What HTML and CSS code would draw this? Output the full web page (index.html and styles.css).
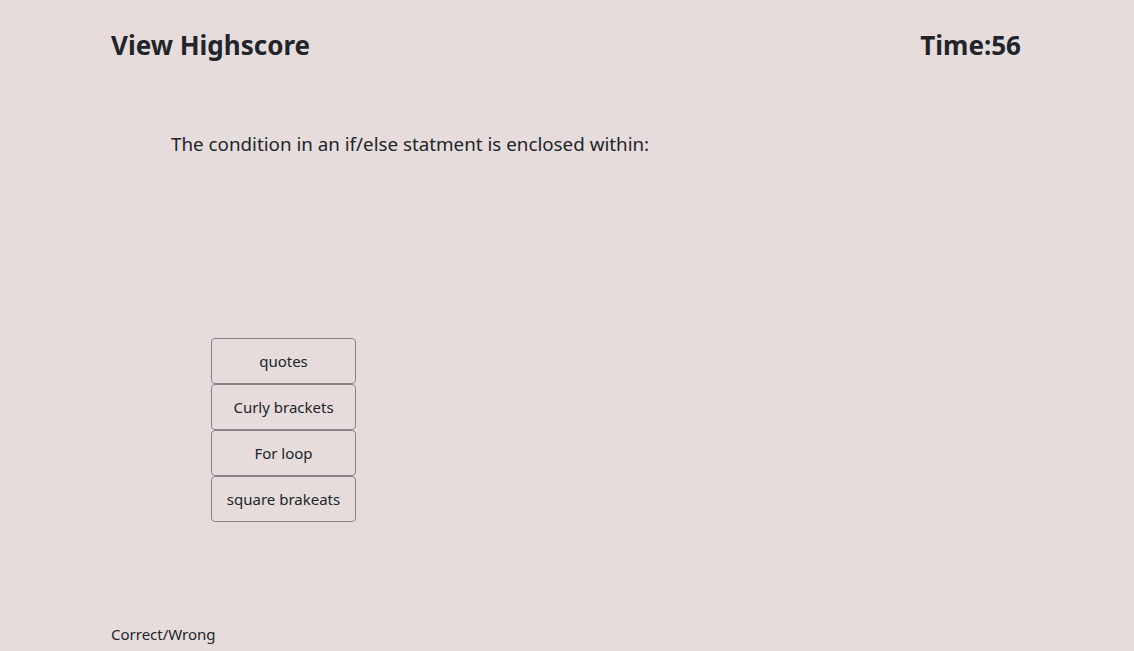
FILE: index.html
```html
<!DOCTYPE html>
<html>
<head>
<meta charset="utf-8">
<link rel="stylesheet" href="styles.css">
</head>
<body>
<div class="page">
  <header class="topbar">
    <h3 class="title">View Highscore</h3>
    <h3 class="timer">Time:56</h3>
  </header>
  <p class="question">The condition in an if/else statment is enclosed within:</p>
  <div class="answers">
    <button class="answer">quotes</button>
    <button class="answer">Curly brackets</button>
    <button class="answer">For loop</button>
    <button class="answer">square brakeats</button>
  </div>
  <p class="result">Correct/Wrong</p>
</div>
</body>
</html>
```
FILE: styles.css
```css
html, body {
  margin: 0;
  padding: 0;
  background: #e6dcdc;
  height: 100%;
}
body {
  font-family: "Noto Sans", "Open Sans", sans-serif;
  color: #212529;
}
.page {
  width: 910px;
  margin: 0 auto 0 111px;
  display: flex;
  flex-direction: column;
  height: 651px;
}
.topbar {
  display: flex;
  justify-content: space-between;
  align-items: center;
  padding-top: 26px;
}
.title, .timer {
  margin: 0;
  font-size: 26px;
  font-weight: 700;
  line-height: 38px;
}
.question {
  margin: 66px 0 0 60px;
  font-size: 18.8px;
  line-height: 28px;
}
.answers {
  margin: 180px 0 0 100px;
  display: flex;
  flex-direction: column;
  width: 145px;
}
.answer {
  font-family: inherit;
  font-size: 15px;
  color: #212529;
  background: transparent;
  border: 1px solid #8a8585;
  border-radius: 4px;
  height: 46px;
  padding: 0;
}
.result {
  margin: auto 0 6px 0;
  font-size: 15px;
  line-height: 22px;
}
```
